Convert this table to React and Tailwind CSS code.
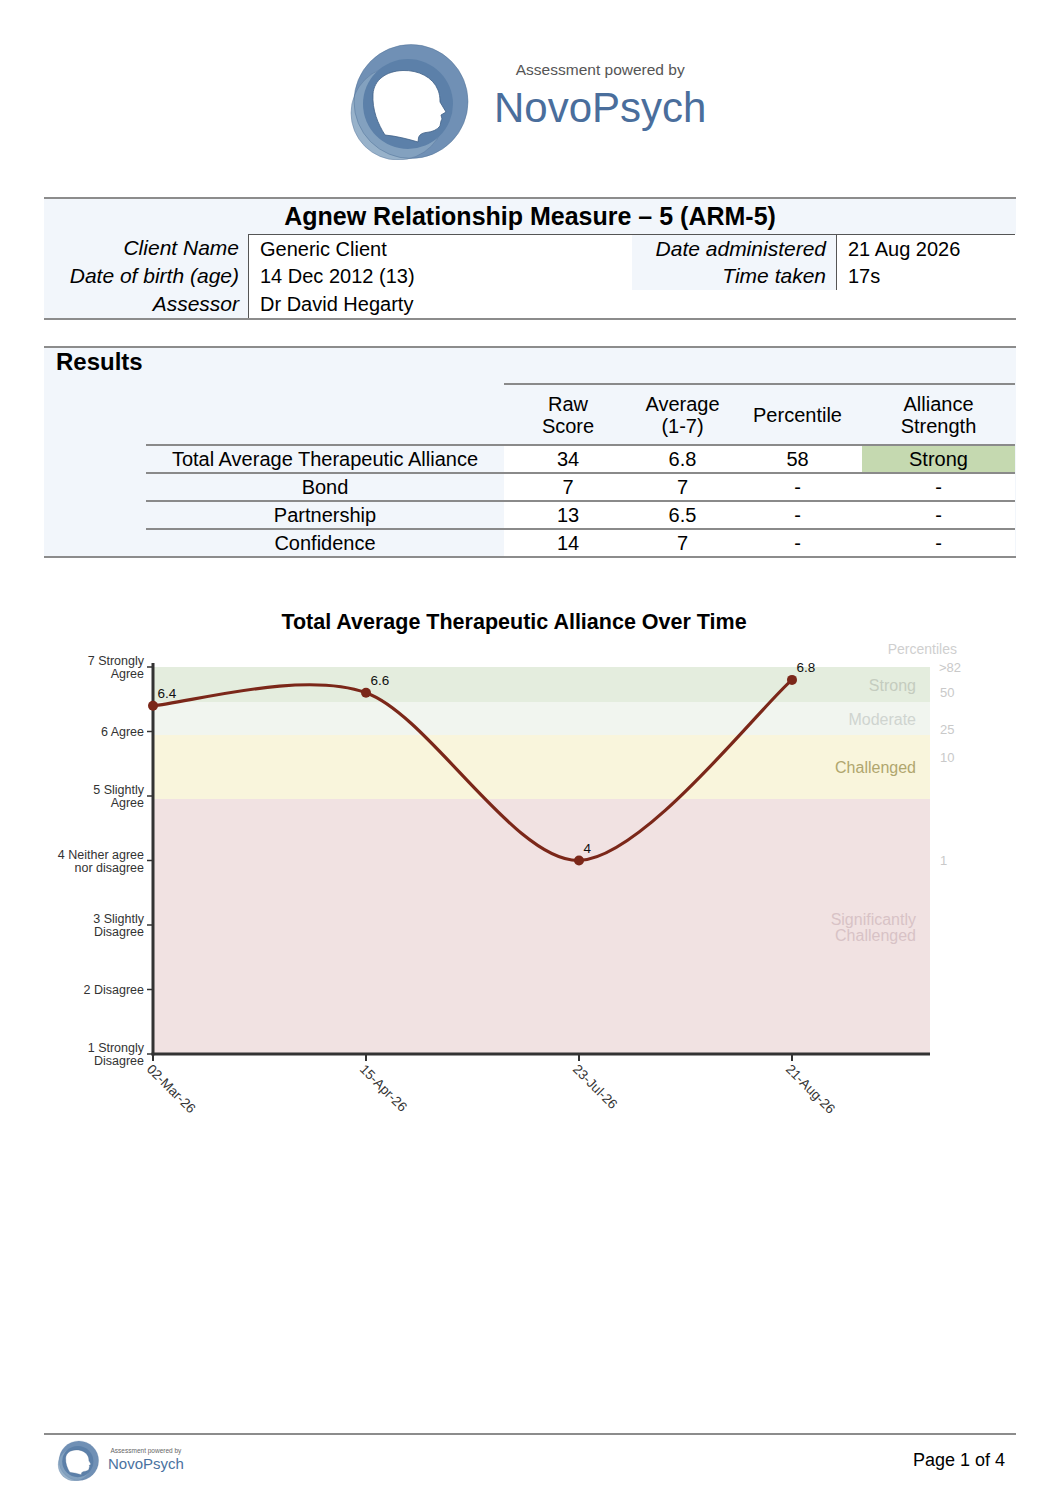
import React from "react";

const BLUE = "bg-[#f2f6fb]";

function Logo({ className }) {
  return (
    <svg viewBox="0 0 124 118" className={className}>
      <circle cx="63" cy="59.5" r="57" fill="#7090b5" />
      <circle cx="50" cy="71" r="47" fill="#86a4c1" opacity="0.85" />
      <circle cx="63" cy="59.5" r="57" fill="none" stroke="#4f6f96" strokeWidth="0.8" opacity="0.6" />
      <circle cx="50" cy="71" r="47" fill="none" stroke="#4f6f96" strokeWidth="0.8" opacity="0.5" />
      <circle cx="60" cy="62" r="45" fill="#5c80a9" />
      <path
        d="M37 93 C30 82, 24 68, 25 52 C26 38, 38 29, 55 28.5 C70 28, 85 35, 90 48 C92 53, 92 58, 92 60 L98 70 L93 73 L94 77 L93 79 L92 84 C89 88, 84 90, 78 90.5 C74 91, 71 93, 70.5 96 L70 100 C60 97, 48 94, 37 93 Z"
        fill="#ffffff"
        stroke="#3f5f86"
        strokeWidth="0.8"
      />
    </svg>
  );
}

const yOf = (v) => 1053 - (v - 1) * 64.5;

function Chart() {
  const yLabels = [
    { v: 7, lines: ["7 Strongly", "Agree"] },
    { v: 6, lines: ["6 Agree"] },
    { v: 5, lines: ["5 Slightly", "Agree"] },
    { v: 4, lines: ["4 Neither agree", "nor disagree"] },
    { v: 3, lines: ["3 Slightly", "Disagree"] },
    { v: 2, lines: ["2 Disagree"] },
    { v: 1, lines: ["1 Strongly", "Disagree"] },
  ];
  const pts = [
    { x: 153, v: 6.4, d: "02-Mar-26" },
    { x: 366, v: 6.6, d: "15-Apr-26" },
    { x: 579, v: 4, d: "23-Jul-26" },
    { x: 792, v: 6.8, d: "21-Aug-26" },
  ];
  const curve =
    "M153,704.7 C184.95,702.77 302.1,668.58 366,691.8 C429.9,715.02 515.1,861.44 579,859.5 C642.9,857.57 760.05,706 792,678.9";
  return (
    <svg width="971" height="500" viewBox="44 634 971 500" className="block">
      <rect x="153" y="666" width="777" height="35" fill="#e4edde" />
      <rect x="153" y="701" width="777" height="33" fill="#f1f5ef" />
      <rect x="153" y="734" width="777" height="64" fill="#f9f5dc" />
      <rect x="153" y="798" width="777" height="255" fill="#f1e2e2" />

      <g fontSize="16" textAnchor="end">
        <text x="916" y="689.5" fill="#c4ccbf">Strong</text>
        <text x="916" y="723.5" fill="#cfd4cf">Moderate</text>
        <text x="916" y="771.5" fill="#b0a66e">Challenged</text>
        <text x="916" y="923.5" fill="#d8c2c6">Significantly</text>
        <text x="916" y="939.5" fill="#d8c2c6">Challenged</text>
      </g>

      <text x="957" y="653" fontSize="14" textAnchor="end" fill="#cfcfcf">Percentiles</text>
      <g fontSize="13" fill="#c9c9c9">
        <text x="939" y="670.5">&gt;82</text>
        <text x="940" y="695.5">50</text>
        <text x="940" y="732.5">25</text>
        <text x="940" y="760.5">10</text>
        <text x="940" y="863.5">1</text>
      </g>

      {yLabels.map((l) => {
        const ty = yOf(l.v);
        return (
          <g key={l.v}>
            <line x1="147" x2="153" y1={ty} y2={ty} stroke="#333" strokeWidth="1.5" />
            {l.lines.length === 1 ? (
              <text x="144" y={ty + 4.4} fontSize="12.5" textAnchor="end" fill="#333">
                {l.lines[0]}
              </text>
            ) : (
              <text x="144" y={ty - 1.8} fontSize="12.5" textAnchor="end" fill="#333">
                <tspan x="144">{l.lines[0]}</tspan>
                <tspan x="144" dy="12.8">{l.lines[1]}</tspan>
              </text>
            )}
          </g>
        );
      })}

      <line x1="153" x2="153" y1="662" y2="1054.5" stroke="#333" strokeWidth="3" />
      <line x1="151.5" x2="930" y1="1053" y2="1053" stroke="#333" strokeWidth="3" />

      {pts.map((p) => (
        <g key={p.d}>
          <line x1={p.x} x2={p.x} y1="1053" y2="1060" stroke="#333" strokeWidth="2" />
          <text
            x={p.x - 7}
            y="1069"
            fontSize="13.5"
            fill="#333"
            transform={`rotate(45 ${p.x - 7} 1069)`}
          >
            {p.d}
          </text>
        </g>
      ))}

      <path d={curve} fill="none" stroke="#7b2719" strokeWidth="3.2" />
      {pts.map((p) => (
        <g key={"p" + p.d}>
          <circle cx={p.x} cy={yOf(p.v)} r="5" fill="#7b2719" />
          <text x={p.x + 4.5} y={yOf(p.v) - 8} fontSize="13.5" fill="#111">
            {p.v}
          </text>
        </g>
      ))}
    </svg>
  );
}

export default function App() {
  const cellB = "border-[#555]";
  return (
    <div className="w-[1060px] h-[1503px] bg-white text-black font-['Liberation_Sans',Arial,sans-serif] px-[44px] pt-[42px] overflow-hidden">
      {/* Top logo */}
      <div className="flex h-[118px] pl-[304px]">
        <Logo className="w-[124px] h-[118px]" />
        <div className="flex flex-col items-center ml-[22px] pt-[19px]">
          <div className="text-[15.5px] leading-[18px] text-[#555]">Assessment powered by</div>
          <div className="text-[42px] leading-[48px] mt-[5px] text-[#4a6e9c]">NovoPsych</div>
        </div>
      </div>

      {/* Header table */}
      <div className="mt-[37px] border-t-2 border-b-2 border-[#8c8c8c]">
        <div className={`h-[35px] ${BLUE} flex items-center justify-center text-[25px] font-bold`}>
          Agnew Relationship Measure – 5 (ARM-5)
        </div>
        <div className="grid grid-cols-[204px_384px_204px_179px] text-[20px]">
          <div className={`h-[28px] ${BLUE} flex items-center justify-end pr-[9px] italic text-[21px]`}>Client Name</div>
          <div className={`h-[28px] border-t border-l ${cellB} flex items-center pl-[11px]`}>Generic Client</div>
          <div className={`h-[28px] ${BLUE} border-t ${cellB} flex items-center justify-end pr-[10px] italic text-[21px]`}>Date administered</div>
          <div className={`h-[28px] border-t border-l ${cellB} flex items-center pl-[11px]`}>21 Aug 2026</div>

          <div className={`h-[28px] ${BLUE} flex items-center justify-end pr-[9px] italic text-[21px]`}>Date of birth (age)</div>
          <div className={`h-[28px] border-l ${cellB} flex items-center pl-[11px]`}>14 Dec 2012 (13)</div>
          <div className={`h-[28px] ${BLUE} flex items-center justify-end pr-[10px] italic text-[21px]`}>Time taken</div>
          <div className={`h-[28px] border-l ${cellB} flex items-center pl-[11px]`}>17s</div>

          <div className={`h-[28px] ${BLUE} flex items-center justify-end pr-[9px] italic text-[21px]`}>Assessor</div>
          <div className={`h-[28px] border-l ${cellB} flex items-center pl-[11px]`}>Dr David Hegarty</div>
          <div className="h-[28px]" />
          <div className="h-[28px]" />
        </div>
      </div>

      {/* Results */}
      <div className={`mt-[26px] border-t-2 border-b-2 border-[#8c8c8c] ${BLUE}`}>
        <div className="h-[35px] pl-[12px] text-[24px] leading-[28px] font-bold">Results</div>
        <div className="grid grid-cols-[102px_358px_128px_101px_129px_153px] text-[20px]">
          <div className="h-[61px]" />
          <div className="h-[61px]" />
          <div className="h-[61px] border-t-2 border-[#8a8a8a] flex items-center justify-center text-center leading-[22px]">
            Raw<br />Score
          </div>
          <div className="h-[61px] border-t-2 border-[#8a8a8a] flex items-center justify-center text-center leading-[22px]">
            Average<br />(1-7)
          </div>
          <div className="h-[61px] border-t-2 border-[#8a8a8a] flex items-center justify-center text-center leading-[22px]">
            Percentile
          </div>
          <div className="h-[61px] border-t-2 border-[#8a8a8a] flex items-center justify-center text-center leading-[22px]">
            Alliance<br />Strength
          </div>

          {[
            ["Total Average Therapeutic Alliance", "34", "6.8", "58", "Strong"],
            ["Bond", "7", "7", "-", "-"],
            ["Partnership", "13", "6.5", "-", "-"],
            ["Confidence", "14", "7", "-", "-"],
          ].map((r, i) => (
            <React.Fragment key={r[0]}>
              <div className="h-[28px]" />
              <div className="h-[28px] border-t-2 border-[#8a8a8a] flex items-center justify-center">{r[0]}</div>
              <div className="h-[28px] border-t-2 border-[#8a8a8a] bg-white flex items-center justify-center">{r[1]}</div>
              <div className="h-[28px] border-t-2 border-[#8a8a8a] bg-white flex items-center justify-center">{r[2]}</div>
              <div className="h-[28px] border-t-2 border-[#8a8a8a] bg-white flex items-center justify-center">{r[3]}</div>
              <div
                className={`h-[28px] border-t-2 border-[#8a8a8a] flex items-center justify-center ${
                  i === 0 ? "bg-[#c5d9b0]" : "bg-white"
                }`}
              >
                {r[4]}
              </div>
            </React.Fragment>
          ))}
        </div>
      </div>

      {/* Chart */}
      <div className="mt-[51px] pr-[32px] text-center text-[21.5px] leading-[26px] font-bold">
        Total Average Therapeutic Alliance Over Time
      </div>
      <Chart />

      {/* Footer */}
      <div className="mt-[298px] border-t-2 border-[#8c8c8c] flex items-center justify-between pt-[5px]">
        <div className="flex items-center">
          <Logo className="w-[43px] h-[41px] ml-[13px]" />
          <div className="flex flex-col items-center ml-[8px] mb-[4px]">
            <div className="text-[6.5px] leading-[9px] text-[#666]">Assessment powered by</div>
            <div className="text-[15px] leading-[17px] text-[#4a72a0]">NovoPsych</div>
          </div>
        </div>
        <div className="text-[18px] mr-[11px]">Page 1 of 4</div>
      </div>
    </div>
  );
}
